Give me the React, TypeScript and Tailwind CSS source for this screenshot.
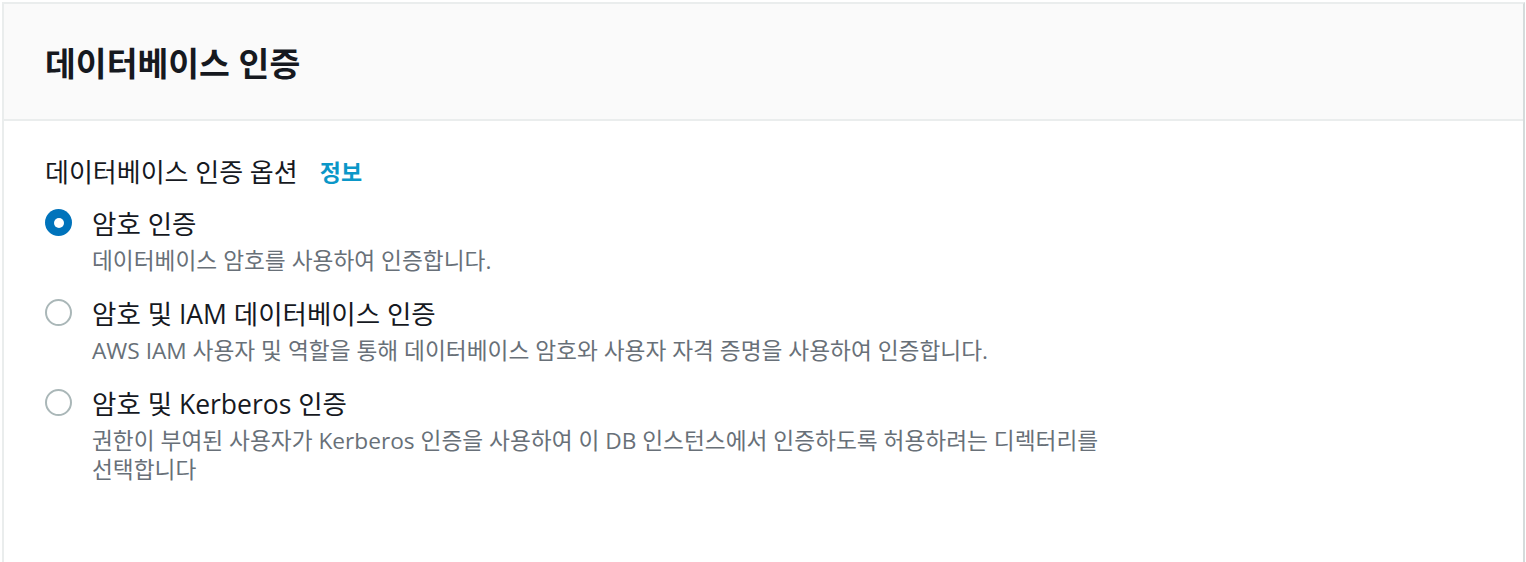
import React from "react";

const font = "font-['Open_Sans','Noto_Sans_CJK_KR',sans-serif]";

const options = [
  {
    label: "암호 인증",
    desc: "데이터베이스 암호를 사용하여 인증합니다.",
    checked: true,
  },
  {
    label: "암호 및 IAM 데이터베이스 인증",
    desc: "AWS IAM 사용자 및 역할을 통해 데이터베이스 암호와 사용자 자격 증명을 사용하여 인증합니다.",
    checked: false,
  },
  {
    label: "암호 및 Kerberos 인증",
    desc: "권한이 부여된 사용자가 Kerberos 인증을 사용하여 이 DB 인스턴스에서 인증하도록 허용하려는 디렉터리를 선택합니다",
    checked: false,
  },
];

function Radio({ checked }: { checked: boolean }) {
  if (checked) {
    return (
      <span className="mt-[3px] flex h-[27px] w-[27px] shrink-0 items-center justify-center rounded-full bg-[#0073bb]">
        <span className="h-[10px] w-[10px] rounded-full bg-white" />
      </span>
    );
  }
  return <span className="mt-[3px] h-[27px] w-[27px] shrink-0 rounded-full border-2 border-[#aab7b8] bg-white" />;
}

export default function App() {
  return (
    <div className={`h-[562px] w-full bg-white pl-[2px] pr-[1px] pt-[2px] ${font}`}>
      <div className="h-full border-l-2 border-r-2 border-t-2 border-l-[#eaeded] border-r-[#d5dbdb] border-t-[#eaeded] bg-white">
        {/* Header */}
        <div className="flex h-[117px] items-center border-b-2 border-[#eaeded] bg-[#fafafa] px-[41px] pt-[3px]">
          <h2 className="text-[33.5px] font-bold text-[#16191f]">데이터베이스 인증</h2>
        </div>

        {/* Body */}
        <div className="px-[41px] pt-[37px]">
          <div className="flex items-center gap-[22px] leading-[28px]">
            <span className="text-[26px] text-[#16191f]">데이터베이스 인증 옵션</span>
            <span className="text-[23px] font-bold text-[#0b97c8]">정보</span>
          </div>

          <div className="mt-[20px] flex flex-col gap-[21px]">
            {options.map((o) => (
              <div key={o.label} className="flex gap-[20px]">
                <Radio checked={o.checked} />
                <div className="max-w-[1020px]">
                  <div className="text-[26.5px] leading-[36px] text-[#16191f]">{o.label}</div>
                  <div className="mt-[4px] text-[22.7px] leading-[29px] text-[#687078]">{o.desc}</div>
                </div>
              </div>
            ))}
          </div>
        </div>
      </div>
    </div>
  );
}
